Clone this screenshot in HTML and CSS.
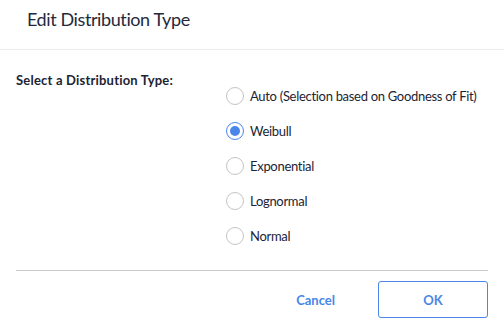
FILE: index.html
```html
<!DOCTYPE html>
<html>
<head>
    <title>Edit Distribution Type</title>
    <link rel="stylesheet" href="styles.css">
</head>
<body>
    <div class="dialog">
        <div class="dialog-header">
            <h1 class="dialog-title">Edit Distribution Type</h1>
        </div>
        <div class="dialog-body">
            <div class="field-label">Select a Distribution Type:</div>
            <div class="options">
                <label class="option"><input type="radio" name="dist" value="auto"><span class="radio"></span>Auto (Selection based on Goodness of Fit)</label>
                <label class="option"><input type="radio" name="dist" value="weibull" checked><span class="radio"></span>Weibull</label>
                <label class="option"><input type="radio" name="dist" value="exponential"><span class="radio"></span>Exponential</label>
                <label class="option"><input type="radio" name="dist" value="lognormal"><span class="radio"></span>Lognormal</label>
                <label class="option"><input type="radio" name="dist" value="normal"><span class="radio"></span>Normal</label>
            </div>
        </div>
        <div class="dialog-footer">
            <button class="btn btn-link">Cancel</button>
            <button class="btn btn-outline">OK</button>
        </div>
    </div>
</body>
</html>
```

FILE: styles.css
```css
body {
    margin: 0;
    background-color: #FFFFFF;
    color: #1d2433; /* Dark Navy */
    font-family: Lato, "Noto Sans", Arial, sans-serif;
}
.dialog {
    width: 504px;
    height: 327px;
    display: flex;
    flex-direction: column;
}
.dialog-header {
    height: 50px;
    border-bottom: 1px solid #ececec;
    display: flex;
    align-items: center;
    padding: 0 0 11px 27px;
    box-sizing: border-box;
}
.dialog-title {
    margin: 0;
    font-size: 18px;
    letter-spacing: -0.4px;
    font-weight: normal;
    color: #1f2a3d;
}
.dialog-body {
    display: flex;
    height: 221px;
    box-sizing: border-box;
    border-bottom: 1px solid #cccccc;
    margin: 0 16px;
    padding-top: 21px;
}
.field-label {
    width: 210px;
    flex-shrink: 0;
    font-size: 13px;
    letter-spacing: 0.2px;
    font-weight: bold;
    line-height: 18px;
}
.options {
    display: flex;
    flex-direction: column;
    gap: 17px;
    padding-top: 16px;
}
.option {
    display: flex;
    align-items: center;
    gap: 6px;
    font-size: 13px;
    letter-spacing: -0.3px;
    line-height: 18px;
    white-space: nowrap;
    cursor: pointer;
}
.option input {
    display: none;
}
/* custom radio circle */
.radio {
    width: 16px;
    height: 16px;
    border: 1px solid #c4c4c4;
    border-radius: 50%;
    box-sizing: content-box;
    position: relative;
}
.option input:checked + .radio {
    border-color: #4a86e8;
}
.option input:checked + .radio::after {
    content: "";
    position: absolute;
    left: 3px;
    top: 3px;
    width: 10px;
    height: 10px;
    border-radius: 50%;
    background-color: #4a86e8;
}
.dialog-footer {
    display: flex;
    justify-content: flex-end;
    align-items: center;
    gap: 43px;
    padding: 10px 16px 0 0;
}
.btn {
    font-family: inherit;
    font-size: 13px;
    font-weight: bold;
    color: #4a86e8;
    background: none;
    cursor: pointer;
}
.btn-link {
    border: none;
    padding: 0;
}
.btn-outline {
    width: 110px;
    height: 37px;
    border: 1px solid #4a86e8;
    border-radius: 3px;
}
```
